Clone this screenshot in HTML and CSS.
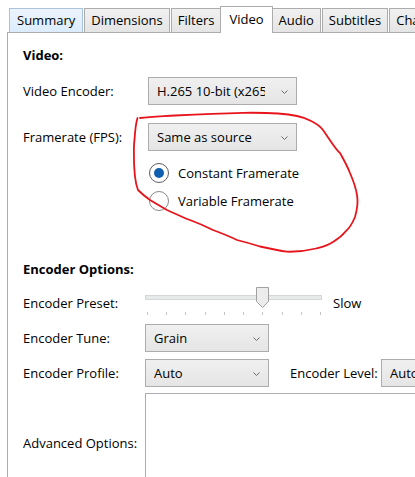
FILE: index.html
```html
<!DOCTYPE html>
<html lang="en">
<head>
<meta charset="utf-8">
<title>Video settings</title>
<link rel="stylesheet" href="styles.css">
</head>
<body>
<div class="tabs">
  <div class="tab tab-hover">Summary</div>
  <div class="tab">Dimensions</div>
  <div class="tab">Filters</div>
  <div class="tab tab-active">Video</div>
  <div class="tab">Audio</div>
  <div class="tab">Subtitles</div>
  <div class="tab">Chapters</div>
</div>
<div class="panel">
  <div class="heading">Video:</div>
  <div class="row row-encoder">
    <div class="label">Video Encoder:</div>
    <div class="select select-wide"><span class="value">H.265 10-bit (x265)</span><svg class="chev" width="7" height="4" viewBox="0 0 7 4"><polyline points="0.5,0.5 3.5,3.5 6.5,0.5" fill="none" stroke="#6a6a6a" stroke-width="1"/></svg></div>
  </div>
  <div class="row row-fps">
    <div class="label">Framerate (FPS):</div>
    <div class="select select-wide"><span class="value">Same as source</span><svg class="chev" width="7" height="4" viewBox="0 0 7 4"><polyline points="0.5,0.5 3.5,3.5 6.5,0.5" fill="none" stroke="#6a6a6a" stroke-width="1"/></svg></div>
  </div>
  <div class="radios">
    <div class="radio-row"><span class="radio radio-on"><span class="dot"></span></span><span>Constant Framerate</span></div>
    <div class="radio-row"><span class="radio"></span><span>Variable Framerate</span></div>
  </div>

  <div class="heading heading-options">Encoder Options:</div>
  <div class="row2 row-preset">
    <div class="label2">Encoder Preset:</div>
    <div class="slider">
      <div class="track">
        <svg class="thumb" width="13" height="21" viewBox="0 0 13 21"><polygon points="0.5,0.5 12.5,0.5 12.5,14.5 6.5,20.5 0.5,14.5" fill="#ececec" stroke="#a0a0a0" stroke-width="1"/></svg>
      </div>
      <div class="ticks">
        <i></i><i></i><i></i><i></i><i></i><i></i><i></i><i></i><i></i><i></i>
      </div>
    </div>
    <div class="slow">Slow</div>
  </div>
  <div class="row2 row-tune">
    <div class="label2">Encoder Tune:</div>
    <div class="select select-mid"><span class="value">Grain</span><svg class="chev" width="7" height="4" viewBox="0 0 7 4"><polyline points="0.5,0.5 3.5,3.5 6.5,0.5" fill="none" stroke="#6a6a6a" stroke-width="1"/></svg></div>
  </div>
  <div class="row2 row-profile">
    <div class="label2">Encoder Profile:</div>
    <div class="select select-mid"><span class="value">Auto</span><svg class="chev" width="7" height="4" viewBox="0 0 7 4"><polyline points="0.5,0.5 3.5,3.5 6.5,0.5" fill="none" stroke="#6a6a6a" stroke-width="1"/></svg></div>
    <div class="level-label">Encoder Level:</div>
    <div class="select select-level"><span class="value">Auto</span></div>
  </div>
  <div class="row2 row-advanced">
    <div class="label2">Advanced Options:</div>
    <div class="textbox"></div>
  </div>
</div>

<svg class="annotation" width="415" height="477" viewBox="0 0 415 477">
  <path d="M140,118 C150,117 160,116.5 175,115.5 C195,114.5 215,113.5 243,112.8 C262,112.5 285,113.5 297,116 C305,117.5 318,123 323,130 C330,140 336,150 340,153 C344,160 348,168 350,173 C353,180 356,188 357,195 C358.5,203 357,210 355,217 C352,224 350,228 346,231 C342,236 338,239 333,242 C327,246 322,247 316,248.5 C310,250 300,252 287,251.7 C278,250.5 269,248.5 260,246.5 C252,244 245,242 237,240 C229,236 221,233 213,230 C205,226 198,223 190,220 C182,217 174,213 167,210 C160,206 155,203 150,200 C145,196.5 141,193 138,190 C136,185 135.5,181 135,176.5 C134.5,171 134,166 134,160 C134,152 133.5,146 134.5,140 C135,132 135.5,124 137.5,118" fill="none" stroke="#e8141b" stroke-width="1.8" stroke-linecap="round" stroke-linejoin="round"/>
</svg>
</body>
</html>
```

FILE: styles.css
```css
html, body {
  margin: 0;
  padding: 0;
  width: 415px;
  height: 477px;
  overflow: hidden;
  background: #ffffff;
}

body {
  position: relative;
  font-family: "Open Sans", "Noto Sans", "DejaVu Sans", sans-serif;
  font-size: 13px;
  color: #000000;
}

.tabs {
  display: flex;
  align-items: flex-end;
  height: 32px;
  padding-left: 9px;
  box-sizing: border-box;
  white-space: nowrap;
}

.tab {
  height: 24px;
  box-sizing: border-box;
  display: flex;
  align-items: center;
  padding: 0 6px;
  margin-right: 1px;
  border: 1px solid #acacac;
  border-bottom: none;
  background: linear-gradient(#f0f0f0, #e5e5e5);
  line-height: 1;
}

.tab-hover {
  background: linear-gradient(#ecf4fc, #dcecfc);
  border-color: #a9c3dd;
  padding: 0 7px;
}

.tab-active {
  height: 27px;
  background: #ffffff;
  margin: 0 -1px -1px -2px;
  padding: 0 8px 1px;
  position: relative;
  z-index: 1;
}

.panel {
  margin-left: 7px;
  border-left: 1px solid #acacac;
  border-top: 1px solid #acacac;
  padding: 13px 0 0 15px;
  height: 460px;
  box-sizing: border-box;
}

.heading {
  font-weight: 700;
  line-height: 18px;
  height: 18px;
}

.row {
  display: grid;
  grid-template-columns: 125px 149px;
  align-items: center;
}

.row-encoder { margin-top: 13px; }
.row-fps { margin-top: 18px; }

.label, .label2 {
  line-height: 18px;
  white-space: nowrap;
}

.select {
  height: 28px;
  box-sizing: border-box;
  border: 1px solid #acacac;
  background: linear-gradient(#f0f0f0, #e5e5e5);
  display: flex;
  align-items: center;
  padding: 0 8px 0 8px;
  white-space: nowrap;
  overflow: hidden;
}

.value {
  display: block;
  overflow: hidden;
  flex: 1 1 0;
  min-width: 0;
}

.chev {
  flex: none;
  margin-left: 16px;
  margin-top: 1px;
}

.radios {
  margin-top: 8px;
  margin-left: 126px;
}

.radio-row {
  height: 28px;
  display: flex;
  align-items: center;
  gap: 9px;
  white-space: nowrap;
}

.radio {
  width: 20px;
  height: 20px;
  box-sizing: border-box;
  border-radius: 50%;
  border: 1px solid #8a8a8a;
  background: #ffffff;
  display: flex;
  align-items: center;
  justify-content: center;
  flex: none;
}

.radio-on {
  border-color: #5d5d5d;
}

.dot {
  width: 10px;
  height: 10px;
  border-radius: 50%;
  background: #0f5fae;
}

.heading-options {
  margin-top: 45px;
}

.row2 {
  display: flex;
  align-items: center;
}

.label2 {
  width: 122px;
  flex: none;
}

.row-preset {
  margin-top: 11px;
  height: 28px;
}

.slider {
  width: 177px;
  height: 28px;
  display: flex;
  flex-direction: column;
}

.track {
  margin-top: 6px;
  height: 5px;
  box-sizing: border-box;
  border: 1px solid #d6d6d6;
  background: #e7eaea;
  position: relative;
}

.thumb {
  position: absolute;
  left: 110px;
  top: -9px;
}

.ticks {
  margin-top: 12px;
  display: flex;
  justify-content: space-between;
  padding: 0 1px 0 2px;
}

.ticks i {
  display: block;
  width: 1px;
  height: 3px;
  background: #c4c4c4;
}

.slow {
  margin-left: 11px;
}

.row-tune { margin-top: 7px; }
.row-profile { margin-top: 7px; }

.select-mid {
  width: 124px;
  flex: none;
}

.level-label {
  margin-left: 21px;
  width: 91px;
  flex: none;
  white-space: nowrap;
}

.select-level {
  width: 80px;
  flex: none;
}

.row-advanced {
  margin-top: 6px;
}

.textbox {
  width: 300px;
  height: 100px;
  flex: none;
  box-sizing: border-box;
  border: 1px solid #abadb3;
  background: #ffffff;
}

.annotation {
  position: absolute;
  left: 0;
  top: 0;
  pointer-events: none;
}
```
